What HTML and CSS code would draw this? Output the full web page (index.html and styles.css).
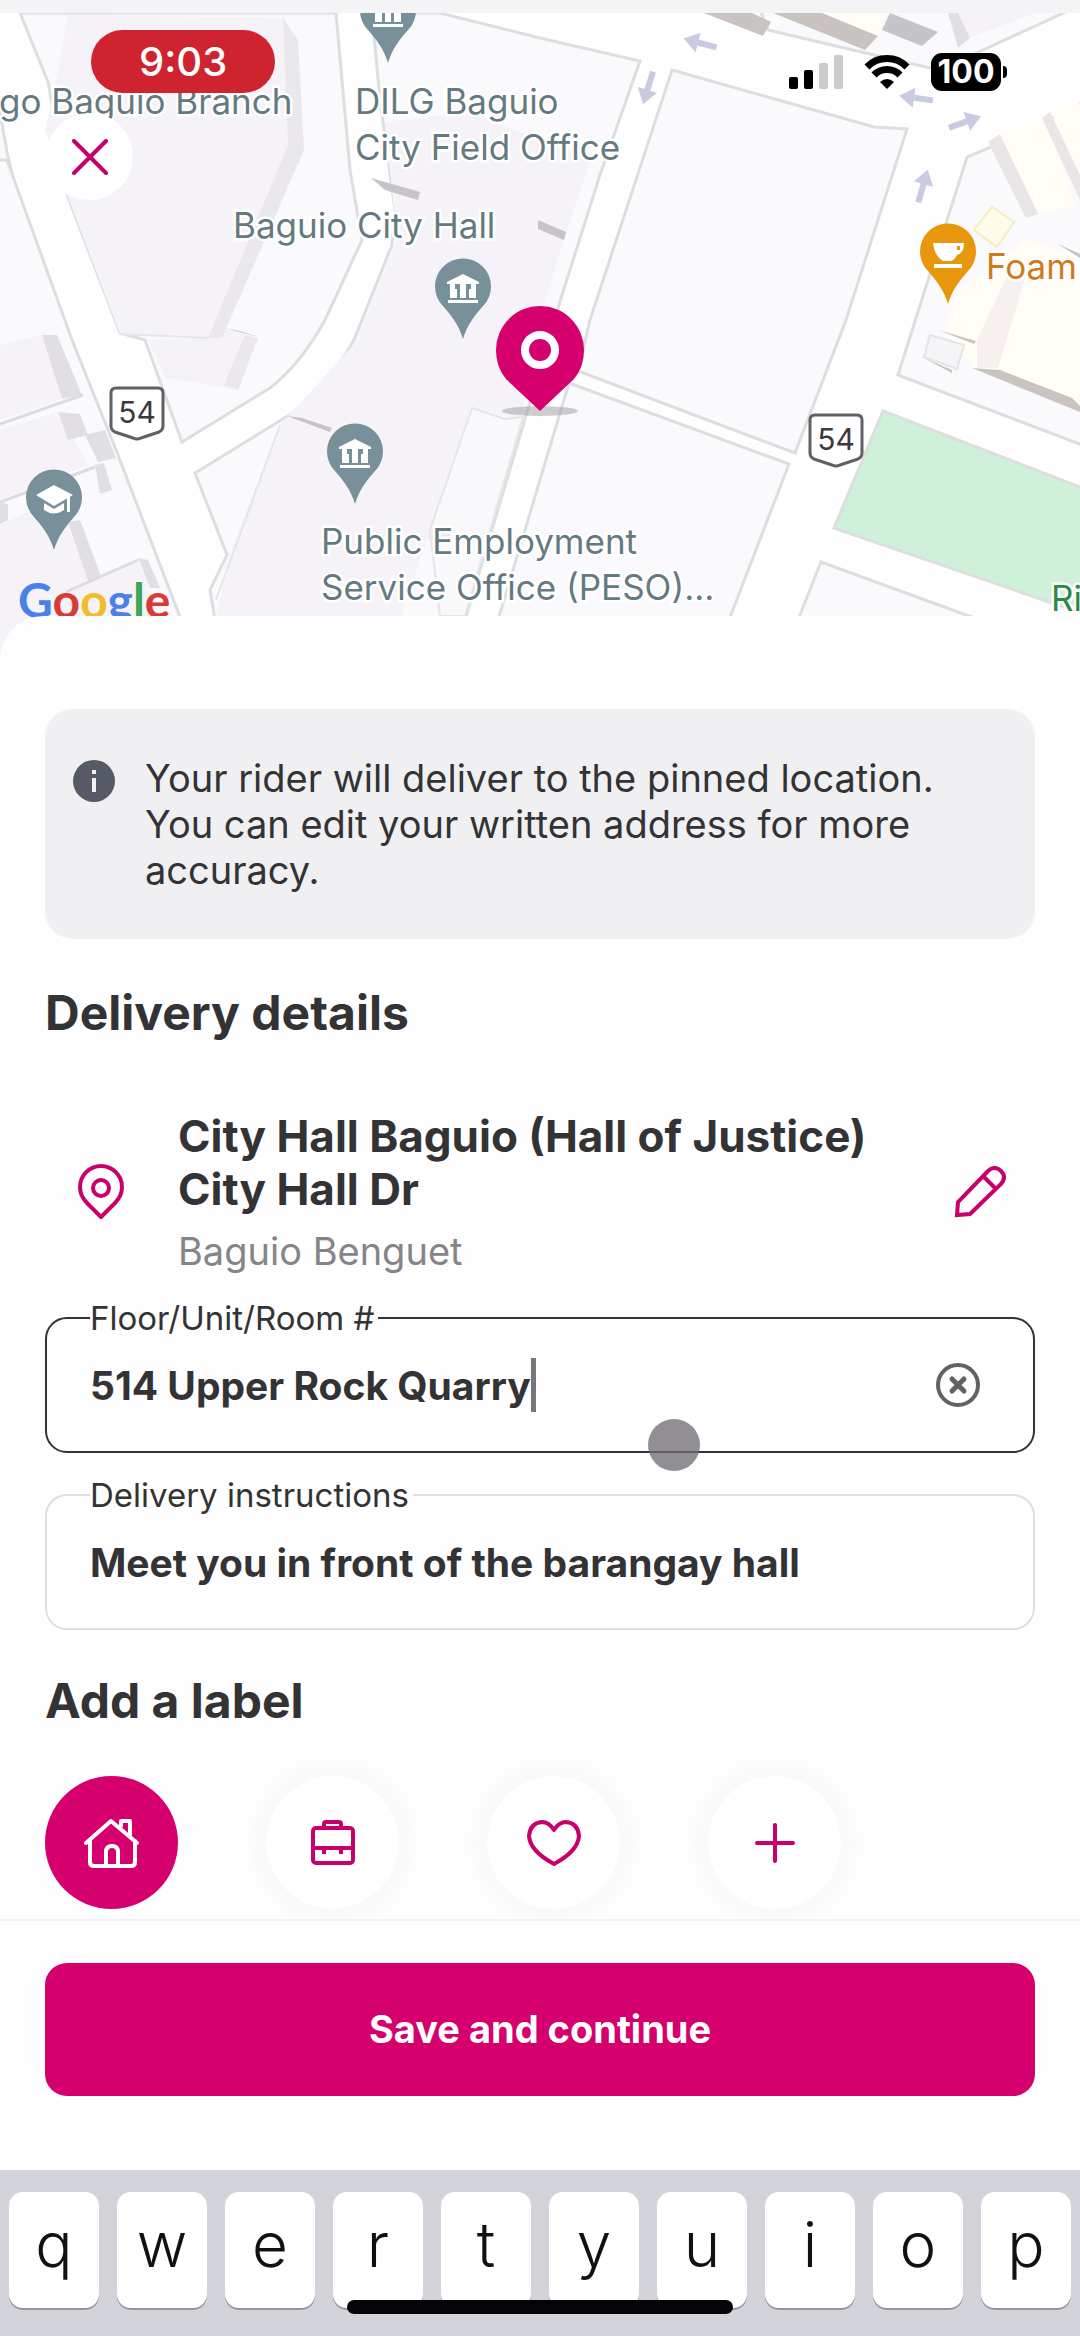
FILE: index.html
```html
<!DOCTYPE html>
<html lang="en">
<head>
  <meta charset="UTF-8" />
  <meta name="viewport" content="width=device-width, initial-scale=1.0"/>
  <title>Delivery details</title>
  <link rel="stylesheet" href="styles.css">
</head>
<body>

  <!-- Map -->
  <div class="map">
    <svg class="map-canvas" viewBox="0 0 1080 660" preserveAspectRatio="xMidYMin slice" role="img" aria-label="Map of Baguio City Hall">
      <defs>
        <path id="poi" d="M0 52 C-4 38 -12 28 -20 19 A28 28 0 1 1 20 19 C12 28 4 38 0 52 Z"/>
        <g id="hall" fill="#fff">
          <path d="M0 -13 L16 -5 V-3 H-16 V-5 Z"/>
          <path d="M-13 -3 H-8 V11 H-13 Z M-3 -3 H3 V11 H-3 Z M8 -3 H13 V11 H8 Z M-8 2 H-6 V11 H-8 Z M6 2 H8 V11 H6 Z"/>
          <path d="M-15 13 H15 V16 H-15 Z"/>
        </g>
        <path id="arrow" fill="#c7cae0" d="M-17 -3 H2 V-10 L17 0 L2 10 V3 H-17 Z"/>
        <path id="shield" d="M5 0 H47 Q52 0 52 5 V38 Q52 42 48 44 L30 50 Q26 52 22 50 L4 44 Q0 42 0 38 V5 Q0 0 5 0 Z" fill="#fff" stroke="#5f6164" stroke-width="3"/>
      </defs>

      <rect width="1080" height="660" fill="#fefefe"/>

      <!-- city blocks -->
      <g fill="#fafafc" stroke="#dddee0" stroke-width="3">
        <path d="M20 13 L48 82 L68 197 L120 333 L145 340 L182 442 L270 388 Q300 365 325 320 L362 240 L350 170 L336 13 Z"/>
        <path d="M372 13 L380 100 L395 210 L392 245 L354 340 Q320 400 286 417 L195 473 L227 555 L210 590 L215 620 H465 L562 295 L600 175 L640 61 L540 38 L440 13 Z"/>
        <path d="M672 70 L874 127 L907 129 L846 320 L795 453 L578 371 L590 320 Z"/>
        <path d="M569 383 L789 464 L729 620 H498 Z"/>
        <path d="M798 620 L821 562 L980 620 Z"/>
        <path d="M898 375 L967 157 L991 147 L1090 100 V448 Z"/>
        <path d="M-4 90 L7 152 L28 240 Q36 300 -4 324 Z"/>
        <path d="M-4 160 L7 160 L72 340 L118 455 L198 664 H-4 Z"/>
        <path d="M760 10 L768 30 L870 54 L930 68 L970 56 L1070 10 Z"/>
      </g>
      <path d="M883 411 L1090 491 V616 L834 528 Z" fill="#cff0d9" stroke="#dcdfdd" stroke-width="3"/>

      <!-- buildings -->
      <g fill="#f5f3f7">
        <path d="M68 15 L285 18 L290 145 L208 338 L120 334 L68 197 L45 130 L60 60 Z"/>
        <path d="M148 340 L208 338 L225 328 L258 338 L238 390 L165 378 Z"/>
        <path d="M385 122 L470 112 L590 160 L545 300 L520 420 L472 408 L430 530 L400 620 H216 L229 556 L280 425 L356 342 L397 240 Z"/>
        <path d="M0 345 L42 335 L62 399 L0 420 Z M0 430 L58 412 L88 465 L0 500 Z M30 510 L68 522 L88 581 L138 560 L176 660 H0 V525 Z"/>
        <path d="M958 13 H1035 L970 38 Z"/>
      </g>
      <path d="M472 408 L505 419 L523 417 L465 616 H440 L430 530 Z" fill="#f9f8fa" stroke="#e6e5e8" stroke-width="2"/>
      <path d="M120 334 L208 338 M280 425 L216 600" fill="none" stroke="#e6e5e8" stroke-width="2"/>
      <g fill="#eae8ec">
        <path d="M283 18 L298 40 L304 150 L222 338 L208 338 L288 145 Z"/>
        <path d="M245 335 L258 338 L238 390 L224 385 Z"/>
        <path d="M430 530 L452 530 L448 540 H428 Z"/>
      </g>
      <g fill="#e1dfe4">
        <path d="M42 335 H57 L82 395 L62 399 Z M58 412 L80 414 L88 435 L68 440 Z M85 435 L105 430 L116 458 L98 462 Z M95 465 L104 463 L112 490 L100 494 Z M68 522 L80 520 L101 576 L88 581 Z M138 558 L148 560 L160 588 L150 588 Z M0 500 L8 505 V520 L0 524 Z"/>
        <path d="M948 13 H958 L970 38 L958 48 Z"/>
      </g>
      <path d="M0 424 L83 395 M0 502 L95 467 M66 592 L138 560" fill="none" stroke="#dddbe0" stroke-width="3"/>
      <g fill="#c6c4c8">
        <path d="M371 178 L420 192 L418 200 L385 190 Z"/>
        <path d="M538 220 L566 232 L564 240 L538 229 Z"/>
        <path d="M287 416 L302 418 L332 428 L330 432 Z"/>
        <path d="M225 328 L258 337 L240 331 Z"/>
        <path d="M890 13 L938 32 L922 46 L882 30 Z"/>
      </g>
      <g fill="#fffdf6">
        <path d="M1000 135 L1045 115 L1075 205 L1040 215 Z M1050 110 L1080 104 V175 Z"/>
        <path d="M822 13 H885 L878 36 Z"/>
        <path d="M960 290 L1025 240 L1080 255 V405 L975 368 L945 330 Z"/>
      </g>
      <g fill="#eae6e5">
        <path d="M988 142 L1000 134 L1038 214 L1026 218 Z M1042 118 L1050 112 L1080 175 V200 Z"/>
        <path d="M977 340 L1010 270 L1026 276 L998 368 H977 Z" fill="#f6f1ef"/>
      </g>
      <g fill="#c9c4c1">
        <path d="M704 13 H752 L771 22 L763 36 Z M773 13 H822 L878 36 L865 50 Z"/>
        <path d="M972 368 L1000 370 L1072 398 L1080 406 V412 Z"/>
        <path d="M938 330 L976 341 L974 344 Z M1058 244 L1080 254 V258 Z M922 357 L952 370 V373 Z"/>
      </g>
      <path d="M992 207 L1014 222 L997 247 L974 230 Z" fill="#fffde9" stroke="#f6edc3" stroke-width="2"/>
      <path d="M930 335 L964 345 L957 369 L924 357 Z" fill="#f5f4f7" stroke="#e4e3e6" stroke-width="2"/>

      <!-- one-way arrows -->
      <use href="#arrow" transform="translate(700 43) rotate(195)"/>
      <use href="#arrow" transform="translate(648 88) rotate(107)"/>
      <use href="#arrow" transform="translate(916 98) rotate(188)"/>
      <use href="#arrow" transform="translate(965 122) rotate(-20)"/>
      <use href="#arrow" transform="translate(923 186) rotate(-74)"/>

      <!-- road numbers -->
      <use href="#shield" x="111" y="388"/>
      <use href="#shield" x="810" y="415"/>
      <g class="road-number">
        <text x="137" y="423">54</text>
        <text x="836" y="450">54</text>
      </g>

      <!-- places -->
      <g fill="#78909a">
        <use href="#poi" x="388" y="11"/>
        <use href="#poi" x="463" y="287"/>
        <use href="#poi" x="355" y="452"/>
        <use href="#poi" x="54" y="498"/>
      </g>
      <use href="#hall" x="388" y="11"/>
      <use href="#hall" x="463" y="287"/>
      <use href="#hall" x="355" y="452"/>
      <g fill="#fff">
        <path d="M36 495 L54 485 L73 495 L54 506 Z"/>
        <path d="M44 503 L54 509 L64 503 V510 Q54 517 44 510 Z"/>
        <path d="M67 497 H70 V512 H67 Z"/>
      </g>
      <use href="#poi" x="948" y="252" fill="#e8960c"/>
      <path d="M933 243 H964 Q964 253 957 255 Q954 261 950 261 H943 Q935 257 933 243 Z M934 264 H962 V268 H934 Z" fill="#fff"/>
      <path d="M957 246 H960 V250 H957 Z" fill="#e8960c"/>

      <g class="place">
        <text x="-1" y="114">go Baguio Branch</text>
        <text x="355" y="114">DILG Baguio</text>
        <text x="355" y="160">City Field Office</text>
        <text x="233" y="238">Baguio City Hall</text>
        <text x="321" y="554">Public Employment</text>
        <text x="321" y="600">Service Office (PESO)...</text>
        <text class="food" x="986" y="279">Foam</text>
        <text class="park" x="1051" y="611">Ri</text>
      </g>

      <text class="google" x="18" y="618"><tspan fill="#4a80e8">G</tspan><tspan fill="#d93a37">o</tspan><tspan fill="#f0be2d">o</tspan><tspan fill="#4a80e8">g</tspan><tspan fill="#3ba757">l</tspan><tspan fill="#d93a37">e</tspan></text>

      <!-- delivery pin -->
      <ellipse cx="540" cy="411" rx="38" ry="5" fill="#9b9b9f" opacity="0.5"/>
      <path d="M540 411 L506 379 Q496 367 496 350 A44 44 0 0 1 584 350 Q584 367 574 379 Z" fill="#d5006d"/>
      <circle cx="540" cy="350" r="15" fill="none" stroke="#fff" stroke-width="8"/>

      <rect width="1080" height="13" fill="#f4f4f6"/>
    </svg>

    <div class="status-bar">
      <span class="clock">9:03</span>
      <div class="status-icons">
        <svg width="54" height="34" viewBox="0 0 54 34" aria-hidden="true">
          <rect x="0" y="22" width="9" height="12" rx="2"/>
          <rect x="15" y="15" width="9" height="19" rx="2"/>
          <g fill="#cbcbcd">
            <rect x="30" y="8" width="9" height="26" rx="2"/>
            <rect x="45" y="0" width="9" height="34" rx="2"/>
          </g>
        </svg>
        <svg width="46" height="34" viewBox="0 0 46 34" aria-hidden="true">
          <path d="M3 12 A28 28 0 0 1 43 12" fill="none" stroke="#000" stroke-width="7"/>
          <path d="M10 20 A18 18 0 0 1 36 20" fill="none" stroke="#000" stroke-width="7"/>
          <path d="M16 27 Q23 21 30 27 L23 34 Z"/>
        </svg>
        <div class="battery">100</div>
      </div>
    </div>

    <button class="close-btn" type="button" aria-label="Close">
      <svg width="36" height="36" viewBox="0 0 36 36" aria-hidden="true">
        <path d="M2 2 L34 34 M34 2 L2 34" fill="none" stroke="#c4006a" stroke-width="4" stroke-linecap="round"/>
      </svg>
    </button>
  </div>

  <!-- Address form -->
  <form class="sheet" id="addressForm">
    <div class="notice">
      <svg width="42" height="42" viewBox="0 0 42 42" aria-hidden="true">
        <circle cx="21" cy="21" r="21" fill="#565a66"/>
        <path d="M19 18 H23 V32 H19 Z M19 10 H23 V14 H19 Z" fill="#f1f1f4"/>
      </svg>
      <p>Your rider will deliver to the pinned location. You can edit your written address for more accuracy.</p>
    </div>

    <h2>Delivery details</h2>

    <div class="address">
      <svg width="46" height="56" viewBox="0 0 46 56" aria-hidden="true">
        <g fill="none" stroke="#c9006b" stroke-width="4">
          <path d="M23 53 L9 39 Q2 32 2 23 A21 21 0 0 1 44 23 Q44 32 37 39 Z" stroke-linejoin="round"/>
          <circle cx="23" cy="24" r="8"/>
        </g>
      </svg>
      <div class="address-text">
        <h3>City Hall Baguio (Hall of Justice) City Hall Dr</h3>
        <p>Baguio Benguet</p>
      </div>
      <button class="edit-btn" type="button" aria-label="Edit address">
        <svg width="52" height="52" viewBox="0 0 52 52" aria-hidden="true">
          <path d="M3 49 L4 36 L34 5 Q41 -1 47 5 Q53 11 47 18 L16 48 Z M29 10 L42 23" fill="none" stroke="#c9006b" stroke-width="4"/>
        </svg>
      </button>
    </div>

    <div class="field active">
      <label for="floor">Floor/Unit/Room #</label>
      <input type="text" id="floor" value="514 Upper Rock Quarry">
      <span class="caret"></span>
      <button class="clear-btn" type="button" aria-label="Clear">
        <svg width="46" height="46" viewBox="0 0 46 46" aria-hidden="true">
          <g fill="none" stroke="#626264" stroke-width="4">
            <circle cx="23" cy="23" r="20"/>
            <path d="M17 17 L29 29 M29 17 L17 29" stroke-width="5" stroke-linecap="round"/>
          </g>
        </svg>
      </button>
      <span class="touch"></span>
    </div>

    <div class="field">
      <label for="instructions">Delivery instructions</label>
      <input type="text" id="instructions" value="Meet you in front of the barangay hall">
    </div>

    <h2>Add a label</h2>

    <div class="labels">
      <button class="label-btn selected" type="button" aria-label="Home">
        <svg width="56" height="50" viewBox="0 0 56 50" fill="none" stroke="#fff" stroke-width="4" stroke-linejoin="round" stroke-linecap="round" aria-hidden="true">
          <path d="M2 25 L27 3 L53 25"/>
          <path d="M6 23 V44 Q6 48 10 48 H47 Q51 48 51 44 V23"/>
          <path d="M22 47 V34 Q22 28 28 28 Q34 28 34 34 V47"/>
          <path d="M37 8 V3 H46 V17"/>
        </svg>
      </button>
      <button class="label-btn" type="button" aria-label="Work">
        <svg width="44" height="46" viewBox="0 0 44 46" fill="none" stroke="#c9006b" stroke-width="4" stroke-linejoin="round" aria-hidden="true">
          <rect x="2" y="8" width="40" height="35" rx="3"/>
          <path d="M13 7 V4 Q13 2 15 2 H28 Q30 2 30 4 V7"/>
          <path d="M2 28 H42 M13 28 V34 M30 28 V34"/>
        </svg>
      </button>
      <button class="label-btn" type="button" aria-label="Partner">
        <svg width="54" height="48" viewBox="0 0 54 48" aria-hidden="true">
          <path d="M27 11 Q22 3 15 3 Q3 4 2 17 Q3 32 27 45 Q51 32 52 17 Q51 4 39 3 Q32 3 27 11 Z" fill="none" stroke="#c9006b" stroke-width="4" stroke-linejoin="round"/>
        </svg>
      </button>
      <button class="label-btn" type="button" aria-label="Add label">
        <svg width="40" height="40" viewBox="0 0 40 40" aria-hidden="true">
          <path d="M20 2 V38 M2 20 H38" fill="none" stroke="#c9006b" stroke-width="4" stroke-linecap="round"/>
        </svg>
      </button>
    </div>
  </form>

  <div class="actions">
    <button class="save-btn" type="submit" form="addressForm">Save and continue</button>
  </div>

  <!-- Keyboard -->
  <div class="keyboard">
    <button class="key" type="button">q</button>
    <button class="key" type="button">w</button>
    <button class="key" type="button">e</button>
    <button class="key" type="button">r</button>
    <button class="key" type="button">t</button>
    <button class="key" type="button">y</button>
    <button class="key" type="button">u</button>
    <button class="key" type="button">i</button>
    <button class="key" type="button">o</button>
    <button class="key" type="button">p</button>
    <span class="home-indicator"></span>
  </div>

</body>
</html>
```
FILE: styles.css
```css
* {
  box-sizing: border-box;
}

body {
  margin: 0;
  min-height: 100vh;
  display: flex;
  flex-direction: column;
  background-color: #fefefe;
  font-family: Inter, sans-serif;
  color: #333335;
}

h2, h3, p {
  margin: 0;
}

button {
  border: none;
  padding: 0;
  background: none;
  font-family: inherit;
  cursor: pointer;
}

svg {
  display: block;
  flex-shrink: 0;
}

.map {
  position: relative;
}

.map-canvas {
  width: 100%;
  height: 660px;
}

.place {
  font-size: 35px;
  fill: #647a80;
  stroke: #fff;
  stroke-width: 5px;
  paint-order: stroke;
}

.place .food {
  fill: #cf7a1c;
}

.place .park {
  fill: #2a8a45;
}

.road-number {
  font-size: 30px;
  fill: #3a3a3c;
  text-anchor: middle;
}

.google {
  font-family: Lato, sans-serif;
  font-size: 48px;
  font-weight: bold;
}

.status-bar {
  position: absolute;
  top: 30px;
  left: 0;
  right: 0;
  padding: 0 79px 0 91px;
  display: flex;
  justify-content: space-between;
  align-items: flex-start;
}

.clock {
  background-color: #cf232f;
  color: #fff;
  padding: 0 48px;
  border-radius: 32px;
  font-size: 40px;
  font-weight: 500;
  line-height: 63px;
}

.status-icons {
  display: flex;
  align-items: center;
  gap: 21px;
  padding-top: 23px;
}

.battery {
  position: relative;
  width: 70px;
  background-color: #000;
  color: #fff;
  border-radius: 11px;
  font-size: 32px;
  font-weight: bold;
  line-height: 38px;
  text-align: center;
}

.battery::after {
  content: "";
  position: absolute;
  top: 13px;
  right: -6px;
  width: 4px;
  height: 12px;
  background-color: #000;
  border-radius: 0 4px 4px 0;
}

.close-btn {
  position: absolute;
  top: 113px;
  left: 46px;
  width: 87px;
  height: 87px;
  border-radius: 50%;
  background-color: #fff;
  display: flex;
  justify-content: center;
  align-items: center;
}

.sheet {
  position: relative;
  flex: 1;
  margin-top: -44px;
  padding: 93px 45px 10px;
  border-radius: 44px 44px 0 0;
  background-color: #fefefe;
  overflow: hidden;
}

.notice {
  display: flex;
  gap: 30px;
  padding: 46px 60px 46px 28px;
  border-radius: 28px;
  background-color: #f0f0f3;
  margin-bottom: 44px;
}

.notice svg {
  margin-top: 5px;
}

.notice p {
  font-size: 38px;
  line-height: 46px;
}

h2 {
  font-size: 48px;
  font-weight: bold;
  line-height: 60px;
}

.address {
  display: flex;
  align-items: center;
  gap: 54px;
  padding: 67px 29px 43px 33px;
}

.address-text {
  flex: 1;
}

h3 {
  font-size: 44px;
  font-weight: bold;
  line-height: 53px;
}

.address p {
  margin-top: 12px;
  font-size: 38px;
  line-height: 46px;
  color: #858587;
}

.field {
  position: relative;
  height: 136px;
  display: flex;
  align-items: center;
  padding: 0 52px 0 43px;
  border: 2px solid #dededf;
  border-radius: 22px;
  margin-bottom: 41px;
}

.field.active {
  border-color: #333335;
}

.field label {
  position: absolute;
  top: -20px;
  left: 43px;
  padding-right: 4px;
  background-color: #fefefe;
  font-size: 33px;
  line-height: 38px;
}

.field input {
  min-width: 0;
  flex: 1;
  border: none;
  outline: none;
  padding: 0;
  background: none;
  color: inherit;
  font-family: inherit;
  font-size: 39px;
  font-weight: bold;
}

.field.active input {
  flex: none;
  field-sizing: content;
}

.caret {
  width: 5px;
  height: 54px;
  background-color: #77777a;
}

.clear-btn {
  margin-left: auto;
}

/* touch indicator */
.touch {
  position: absolute;
  left: 61%;
  bottom: -20px;
  width: 52px;
  height: 52px;
  border-radius: 50%;
  background-color: rgba(110, 106, 112, 0.75);
}

.labels {
  display: flex;
  gap: 88px;
  margin-top: 45px;
}

.label-btn {
  width: 133px;
  height: 133px;
  border-radius: 50%;
  background-color: #fff;
  box-shadow: 0 0 24px 8px rgba(110, 60, 140, 0.04);
  display: flex;
  justify-content: center;
  align-items: center;
}

.label-btn.selected {
  background-color: #d5006d;
  box-shadow: none;
}

.actions {
  position: relative;
  padding: 42px 45px 74px;
  border-top: 2px solid #f1f1f3;
  background-color: #fefefe;
}

.save-btn {
  display: block;
  width: 100%;
  border-radius: 22px;
  background-color: #d5006d;
  color: #fff;
  font-size: 38px;
  font-weight: bold;
  line-height: 133px;
}

.keyboard {
  position: relative;
  display: grid;
  grid-template-columns: repeat(10, 1fr);
  gap: 18px;
  padding: 22px 9px 28px;
  background-color: #d3d4da;
}

.key {
  height: 116px;
  padding-bottom: 12px;
  border-radius: 14px;
  background-color: #fff;
  box-shadow: 0 2px 0 #97989d;
  color: #111;
  font-size: 62px;
  font-weight: 300;
}

.home-indicator {
  position: absolute;
  left: 50%;
  bottom: 22px;
  width: 386px;
  height: 14px;
  margin-left: -193px;
  border-radius: 7px;
  background-color: #050507;
}
```
